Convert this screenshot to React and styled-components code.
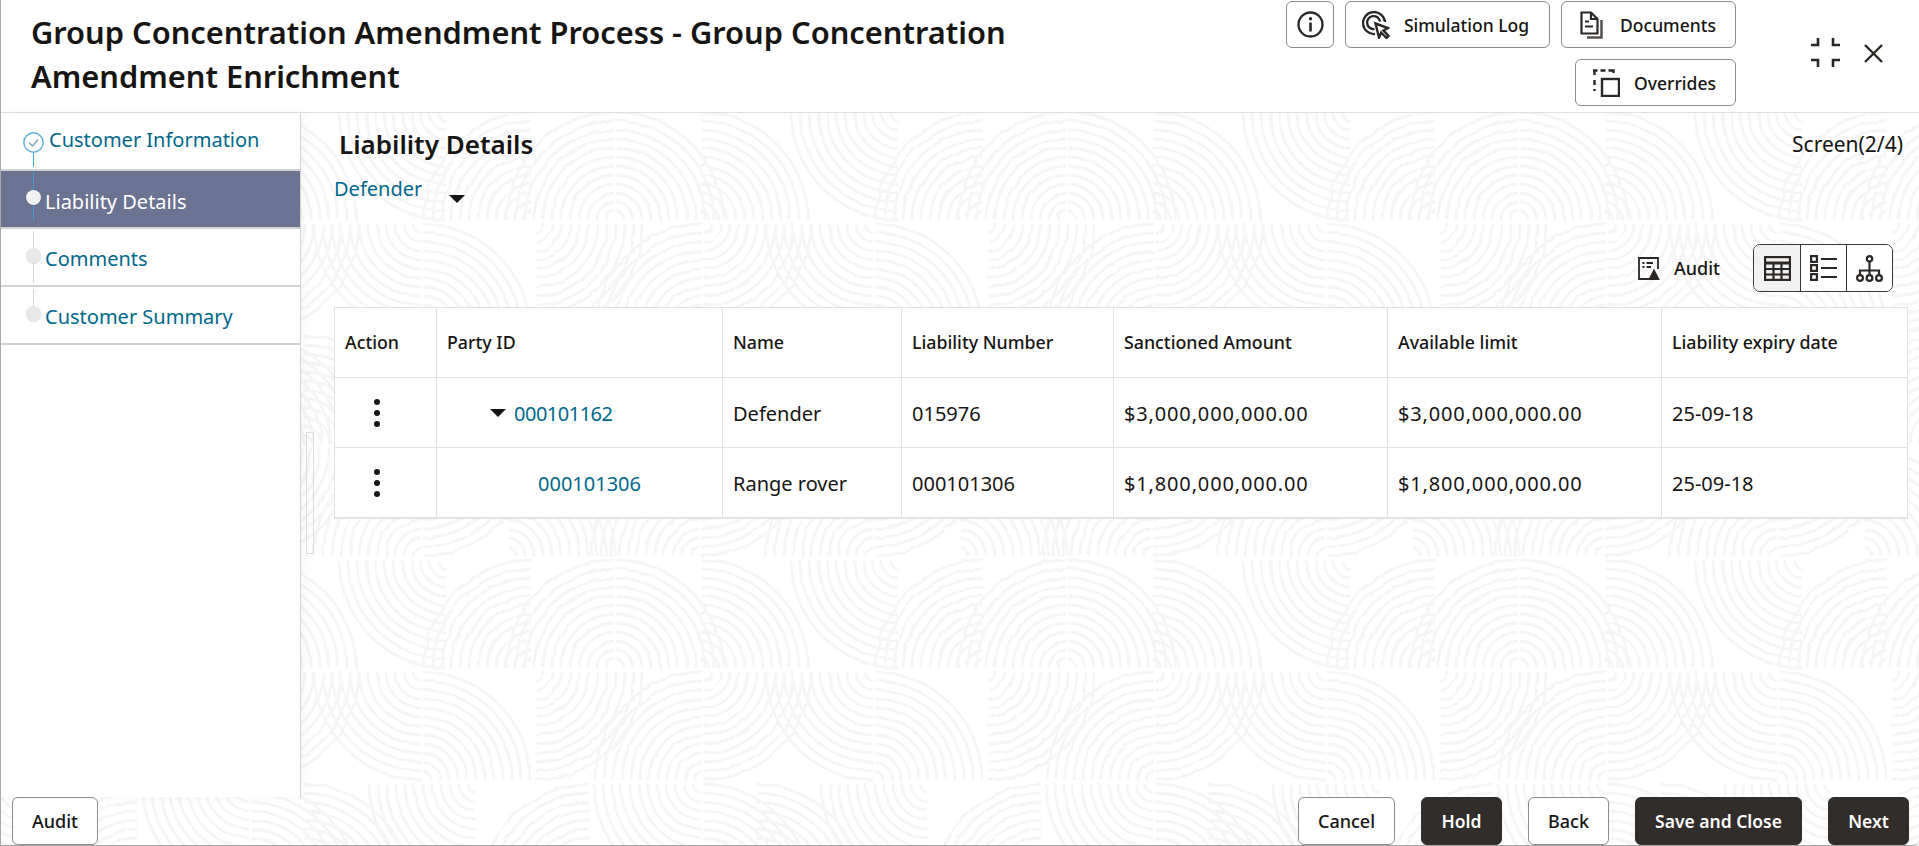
import React from 'react';
import styled, { createGlobalStyle } from 'styled-components';

const TILE_W = 452;
const TILE_H = 448;
const RING_GAP = 9;
const RING_MAX = 108;

// quarter-circle fans of the watermark: [centre x, row, top or bottom, direction]
const fans = [
  [147, 0, 'T', -1], [232, 0, 'B', -1], [315, 0, 'B', -1], [315, 0, 'B', 1], [400, 0, 'B', 1],
  [122, 1, 'T', -1], [122, 1, 'B', 1], [235, 1, 'T', 1], [403, 1, 'B', -1], [403, 1, 'T', 1],
  [177, 2, 'T', -1], [402, 2, 'T', -1], [290, 2, 'B', -1], [402, 2, 'B', 1], [455, 2, 'B', 1],
  [122, 3, 'B', -1], [122, 3, 'T', 1], [207, 3, 'B', 1], [400, 3, 'B', -1], [400, 3, 'T', 1],
];

function fanPath([x, row, side, dx]) {
  const cy = row * 112 + (side === 'B' ? 110 : 2);
  const dy = side === 'B' ? -1 : 1;
  const sweep = dx * dy > 0 ? 1 : 0;
  let d = '';
  for (const shift of [-TILE_W, 0, TILE_W]) {
    for (let r = 9; r <= RING_MAX; r += RING_GAP) {
      const cx = x + shift;
      d += `M${cx + dx * r} ${cy}A${r} ${r} 0 0 ${sweep} ${cx + dx} ${cy + dy * r}`;
    }
  }
  return d;
}

// a little displacement makes the rings as uneven as the watermark in the design
const watermark = `<svg xmlns="http://www.w3.org/2000/svg" width="${TILE_W}" height="${TILE_H}"><filter id="w" filterUnits="userSpaceOnUse" x="0" y="0" width="${TILE_W}" height="${TILE_H}"><feTurbulence type="fractalNoise" baseFrequency="0.06" numOctaves="2" seed="4"/><feDisplacementMap in="SourceGraphic" scale="3.5"/></filter><path filter="url(#w)" fill="none" stroke="#f5f5f5" stroke-width="2.8" d="${fans.map(fanPath).join('')}"/></svg>`;
const watermarkUrl = `url("data:image/svg+xml,${encodeURIComponent(watermark)}")`;

const GlobalStyle = createGlobalStyle`
  html, body {
    margin: 0;
    padding: 0;
    background: #fff;
  }
  * {
    box-sizing: border-box;
  }
`;

const Page = styled.div`
  width: 1919px;
  height: 846px;
  display: flex;
  flex-direction: column;
  overflow: hidden;
  font-family: "Noto Sans", "Liberation Sans", sans-serif;
  color: #161513;
  background: #fff ${watermarkUrl} 299px 110px repeat;
  border-left: 1px solid #a8a8a8;
  border-bottom: 1px solid #a8a8a8;
  border-bottom-right-radius: 6px;
`;

const Header = styled.header`
  height: 113px;
  flex: none;
  display: flex;
  background: #fff;
  border-bottom: 1px solid #e0e0e0;
  padding-left: 30px;
`;

const Title = styled.h1`
  width: 1040px;
  margin: 10px 0 0;
  font-size: 30.8px;
  font-weight: 600;
  line-height: 44px;
`;

const HeaderActions = styled.div`
  margin-left: auto;
  display: flex;
  flex-direction: column;
  align-items: flex-end;
  gap: 11px;
  padding-top: 1px;
`;

const ActionRow = styled.div`
  display: flex;
  gap: 11px;
`;

const OutlineButton = styled.button`
  width: ${({ $w }) => $w}px;
  height: 47px;
  display: flex;
  align-items: center;
  justify-content: center;
  gap: ${({ $gap }) => $gap || 0}px;
  padding: 0 ${({ $shift }) => $shift || 0}px 0 0;
  background: #fff;
  border: 1px solid #8d8b89;
  border-radius: 6px;
  font: 500 17.5px "Noto Sans", "Liberation Sans", sans-serif;
  color: #161513;
`;

const WindowControls = styled.div`
  width: 183px;
  flex: none;
  display: flex;
  align-items: flex-start;
  gap: 24px;
  padding: 38px 0 0 75px;
`;

const Body = styled.div`
  flex: 1;
  min-height: 0;
  display: flex;
`;

const Sidebar = styled.nav`
  width: 300px;
  flex: none;
  background: #fff;
  border-right: 1px solid #d4d4d4;
  box-shadow: 3px 0 14px rgba(0, 0, 0, 0.04);
`;

const StepRow = styled.div`
  position: relative;
  height: 58px;
  display: flex;
  align-items: center;
  padding-left: 25px;
  background: ${({ $active }) => ($active ? '#6b7393' : 'transparent')};
  border-bottom: 2px solid #d2d2d2;

  &::before {
    content: '';
    position: absolute;
    left: 32px;
    width: 1px;
    top: ${({ $lineTop }) => $lineTop}px;
    bottom: ${({ $lineBottom }) => $lineBottom}px;
    background: ${({ $lineColor }) => $lineColor};
  }
`;

const StepDot = styled.span`
  position: relative;
  z-index: 1;
  width: 15px;
  height: 15px;
  flex: none;
  margin-top: -3px;
  border-radius: 50%;
  background: ${({ $active }) => ($active ? '#f2f2f2' : '#e8e8e8')};
  box-shadow: 0 1px 1px rgba(0, 0, 0, 0.12);
`;

const StepCheck = styled.svg`
  position: relative;
  z-index: 1;
  flex: none;
  margin: 2px 0 0 -3px;
`;

const StepLabel = styled.span`
  margin-left: ${({ $gap }) => $gap}px;
  margin-top: ${({ $offset }) => $offset}px;
  font-size: 20px;
  color: ${({ $active }) => ($active ? '#fff' : '#00688c')};
`;

const Main = styled.main`
  position: relative;
  flex: 1;
  min-width: 0;
  padding: 15px 11px 0 33px;
`;

const ScrollHandle = styled.div`
  position: absolute;
  left: 5px;
  top: 319px;
  width: 8px;
  height: 122px;
  border: 1px solid #dcdcdc;
`;

const TitleRow = styled.div`
  display: flex;
  align-items: center;
  justify-content: space-between;
  height: 32px;
  padding: 0 5px;
`;

const SectionTitle = styled.h2`
  margin: 0;
  font-size: 26px;
  font-weight: 600;
`;

const ScreenCount = styled.span`
  font-size: 21px;
`;

const PartySelect = styled.div`
  display: flex;
  align-items: flex-start;
  gap: 27px;
  margin-top: 15px;
  height: 69px;
  font-size: 20px;
  color: #00688c;
`;

const Caret = styled.span`
  flex: none;
  width: 0;
  height: 0;
  border-left: ${({ $w }) => $w / 2}px solid transparent;
  border-right: ${({ $w }) => $w / 2}px solid transparent;
  border-top: ${({ $w }) => $w / 2}px solid #161513;
`;

const SelectCaret = styled(Caret)`
  margin-top: 20px;
`;

const Toolbar = styled.div`
  display: flex;
  justify-content: flex-end;
  align-items: center;
  height: 48px;
  margin-bottom: 15px;
  padding-right: 15px;
`;

const AuditAction = styled.div`
  display: flex;
  align-items: center;
  gap: 14px;
  margin-right: 33px;
  font-size: 18px;
  font-weight: 500;
`;

const ViewToggle = styled.div`
  display: flex;
  height: 48px;
  border: 1px solid #3a3632;
  border-radius: 7px;
  overflow: hidden;
`;

const ViewOption = styled.div`
  width: 46px;
  display: flex;
  align-items: center;
  justify-content: center;
  background: ${({ $selected }) => ($selected ? '#f1f1f1' : '#fff')};
  & + & {
    border-left: 1px solid #3a3632;
  }
`;

const Table = styled.div`
  background: #fff;
  border: 1px solid #e2e2e2;
  border-bottom-width: 2px;
`;

const TableRow = styled.div`
  display: grid;
  grid-template-columns: 101px 286px 179px 212px 274px 274px 1fr;
  height: ${({ $head }) => ($head ? 69 : 70)}px;
  & + & {
    border-top: 1px solid #e2e2e2;
  }
`;

const Cell = styled.div`
  display: flex;
  align-items: center;
  padding: ${({ $head }) => ($head ? '0 0 2px' : '1px 0 0')};
  padding-left: ${({ $indent }) => $indent || 10}px;
  font-size: ${({ $head }) => ($head ? 17.8 : 20)}px;
  font-weight: ${({ $head }) => ($head ? 500 : 400)};
  letter-spacing: ${({ $spaced }) => ($spaced ? '0.85px' : 'normal')};
  & + & {
    border-left: 1px solid #e2e2e2;
  }
`;

const PartyLink = styled.span`
  color: #00688c;
  letter-spacing: ${({ $tight }) => ($tight ? '-0.5px' : 'normal')};
`;

const TreeCaret = styled(Caret)`
  margin-right: 8px;
`;

const Kebab = styled.div`
  display: flex;
  flex-direction: column;
  gap: 5px;
  margin-top: -1px;

  span {
    width: 6px;
    height: 6px;
    border-radius: 50%;
    background: #161513;
  }
`;

const Footer = styled.footer`
  height: 48px;
  flex: none;
  display: flex;
  align-items: flex-start;
  justify-content: space-between;
  padding: 0 10px 0 11px;
`;

const FooterGroup = styled.div`
  display: flex;
  gap: 26px;
`;

const FooterButton = styled.button`
  width: ${({ $w }) => $w}px;
  height: 48px;
  padding: 0;
  background: ${({ $primary }) => ($primary ? '#312d2a' : '#fff')};
  border: 1px solid ${({ $primary }) => ($primary ? '#312d2a' : '#8d8b89')};
  border-radius: 6px;
  font: ${({ $primary }) => ($primary ? '600 17.5px' : '500 18px')} "Noto Sans", "Liberation Sans", sans-serif;
  color: ${({ $primary }) => ($primary ? '#fff' : '#161513')};
`;

const Glyph = styled.svg`
  flex: none;
  display: block;
  fill: none;
  stroke: #2a2725;
  stroke-width: ${({ $sw }) => $sw || 2}px;
`;

const CloseGlyph = styled(Glyph)`
  margin-top: 6px;
`;

const InfoIcon = () => (
  <Glyph width="27" height="27" viewBox="0 0 27 27" $sw={2.3}>
    <circle cx="13.5" cy="13.5" r="12" />
    <circle cx="13.5" cy="7.8" r="1.7" fill="#2a2725" stroke="none" />
    <path d="M13.5 11.5V20.5" strokeWidth="2.6" />
  </Glyph>
);

const SimulationIcon = () => (
  <Glyph width="28" height="28" viewBox="0 0 28 28" $sw={2.3}>
    <path d="M23 11A11 11 0 1 0 13 23" />
    <path d="M18 10.5A6.5 6.5 0 1 0 12.5 18" />
    <path d="M13.5 12.5L26 17L21.5 19.5L26.5 25L24.5 27L19.2 21.5L17 26.5Z" strokeWidth="2.4" strokeLinejoin="miter" />
  </Glyph>
);

const DocumentsIcon = () => (
  <Glyph width="24" height="28" viewBox="0 0 24 28" $sw={2.2}>
    <path d="M1.5 1.5H11L17.5 8V22.5H1.5Z" />
    <path d="M11 1.5V8H17.5" />
    <path d="M5 10.5H9M5 15.5H13" />
    <path d="M21.5 9V26.5H7" stroke="#55514e" strokeWidth="2.5" />
  </Glyph>
);

const OverridesIcon = () => (
  <Glyph width="27" height="28" viewBox="0 0 27 28" $sw={2.4}>
    <rect x="9" y="10" width="17" height="17" />
    <path d="M0 1.5H4.5M7.5 1.5H12.5M15.5 1.5H20.5V4M1.5 1V6M1.5 11V16M1.5 20V22" />
  </Glyph>
);

const CollapseIcon = () => (
  <Glyph width="29" height="29" viewBox="0 0 29 29" $sw={2.6}>
    <path d="M0 7H7V0M22 0V7H29M0 22H7V29M29 22H22V29" />
  </Glyph>
);

const CloseIcon = () => (
  <CloseGlyph width="19" height="19" viewBox="0 0 19 19" $sw={2.4}>
    <path d="M1 1L18 18M18 1L1 18" />
  </CloseGlyph>
);

const AuditIcon = () => (
  <Glyph width="22" height="23" viewBox="0 0 22 23" $sw={1.8}>
    <path d="M20 12V1H1V22H11" />
    <path d="M4.5 6H6.5M8.5 6H15M4.5 10H6.5M8.5 10H13" />
    <path d="M16 11.5L21.8 23H10.2Z" fill="#2a2725" stroke="none" />
  </Glyph>
);

const TableIcon = () => (
  <Glyph width="27" height="25" viewBox="0 0 27 25" $sw={2.2}>
    <rect x="1.1" y="1.1" width="24.8" height="22.8" />
    <path d="M1 7H26" strokeWidth="3" />
    <path d="M1 13H26M1 18.5H26M9.5 7V24M17.5 7V24" />
  </Glyph>
);

const ListIcon = () => (
  <Glyph width="27" height="26" viewBox="0 0 27 26" $sw={2.2}>
    <rect x="1.1" y="1.1" width="5.8" height="5.8" />
    <rect x="1.1" y="10.1" width="5.8" height="5.8" />
    <rect x="1.1" y="19.1" width="5.8" height="5.8" />
    <path d="M11 4H27M11 13H27M11 22H27" />
  </Glyph>
);

const HierarchyIcon = () => (
  <Glyph width="27" height="27" viewBox="0 0 27 27" $sw={2.2}>
    <circle cx="13.5" cy="3.8" r="2.7" />
    <circle cx="4" cy="23" r="2.9" />
    <circle cx="13.5" cy="23" r="2.9" />
    <circle cx="23" cy="23" r="2.9" />
    <path d="M13.5 6.5V20M4 20V15.5H23V20" />
  </Glyph>
);

const steps = [
  { label: 'Customer Information', done: true, gap: 5, offset: -3, lineColor: '#3fa0cf', lineTop: 39, lineBottom: 2 },
  { label: 'Liability Details', active: true, gap: 4, offset: 5, lineColor: '#3fa0cf', lineTop: 0, lineBottom: 6 },
  { label: 'Comments', gap: 4, offset: 2, lineColor: '#d2d2d2', lineTop: 2, lineBottom: 2 },
  { label: 'Customer Summary', gap: 4, offset: 2, lineColor: '#d2d2d2', lineTop: 2, lineBottom: 30 },
];

const columns = ['Action', 'Party ID', 'Name', 'Liability Number', 'Sanctioned Amount', 'Available limit', 'Liability expiry date'];

const rows = [
  { id: '000101162', indent: 53, expanded: true, name: 'Defender', number: '015976', sanctioned: '$3,000,000,000.00', available: '$3,000,000,000.00', expiry: '25-09-18' },
  { id: '000101306', indent: 101, name: 'Range rover', number: '000101306', sanctioned: '$1,800,000,000.00', available: '$1,800,000,000.00', expiry: '25-09-18' },
];

export default function App() {
  return (
    <>
      <GlobalStyle />
      <Page>
        <Header>
          <Title>Group Concentration Amendment Process - Group Concentration Amendment Enrichment</Title>
          <HeaderActions>
            <ActionRow>
              <OutlineButton $w={48} aria-label="Info"><InfoIcon /></OutlineButton>
              <OutlineButton $w={205} $gap={14} $shift={4}><SimulationIcon />Simulation Log</OutlineButton>
              <OutlineButton $w={175} $gap={16} $shift={1}><DocumentsIcon />Documents</OutlineButton>
            </ActionRow>
            <OutlineButton $w={161} $gap={14} $shift={2}><OverridesIcon />Overrides</OutlineButton>
          </HeaderActions>
          <WindowControls>
            <CollapseIcon />
            <CloseIcon />
          </WindowControls>
        </Header>
        <Body>
          <Sidebar>
            {steps.map((step) => (
              <StepRow key={step.label} $active={step.active} $lineColor={step.lineColor} $lineTop={step.lineTop} $lineBottom={step.lineBottom}>
                {step.done ? (
                  <StepCheck width="21" height="21" viewBox="0 0 21 21" fill="#fff">
                    <circle cx="10.5" cy="10.5" r="9.7" stroke="#5ab0d8" strokeWidth="1.4" />
                    <path d="M6 10.5L9.5 14L15 7.5" fill="none" stroke="#7f9fb0" strokeWidth="1.2" />
                  </StepCheck>
                ) : (
                  <StepDot $active={step.active} />
                )}
                <StepLabel $active={step.active} $gap={step.gap} $offset={step.offset}>{step.label}</StepLabel>
              </StepRow>
            ))}
          </Sidebar>
          <Main>
            <ScrollHandle />
            <TitleRow>
              <SectionTitle>Liability Details</SectionTitle>
              <ScreenCount>Screen(2/4)</ScreenCount>
            </TitleRow>
            <PartySelect>
              Defender
              <SelectCaret $w={16} />
            </PartySelect>
            <Toolbar>
              <AuditAction><AuditIcon />Audit</AuditAction>
              <ViewToggle>
                <ViewOption $selected><TableIcon /></ViewOption>
                <ViewOption><ListIcon /></ViewOption>
                <ViewOption><HierarchyIcon /></ViewOption>
              </ViewToggle>
            </Toolbar>
            <Table>
              <TableRow $head>
                {columns.map((col) => <Cell key={col} $head>{col}</Cell>)}
              </TableRow>
              {rows.map((row) => (
                <TableRow key={row.id}>
                  <Cell $indent={39}><Kebab><span /><span /><span /></Kebab></Cell>
                  <Cell $indent={row.indent}>
                    {row.expanded && <TreeCaret $w={16} />}
                    <PartyLink $tight={row.expanded}>{row.id}</PartyLink>
                  </Cell>
                  <Cell>{row.name}</Cell>
                  <Cell>{row.number}</Cell>
                  <Cell $spaced>{row.sanctioned}</Cell>
                  <Cell $spaced>{row.available}</Cell>
                  <Cell>{row.expiry}</Cell>
                </TableRow>
              ))}
            </Table>
          </Main>
        </Body>
        <Footer>
          <FooterButton $w={86}>Audit</FooterButton>
          <FooterGroup>
            <FooterButton $w={97}>Cancel</FooterButton>
            <FooterButton $w={81} $primary>Hold</FooterButton>
            <FooterButton $w={81}>Back</FooterButton>
            <FooterButton $w={167} $primary>Save and Close</FooterButton>
            <FooterButton $w={81} $primary>Next</FooterButton>
          </FooterGroup>
        </Footer>
      </Page>
    </>
  );
}
